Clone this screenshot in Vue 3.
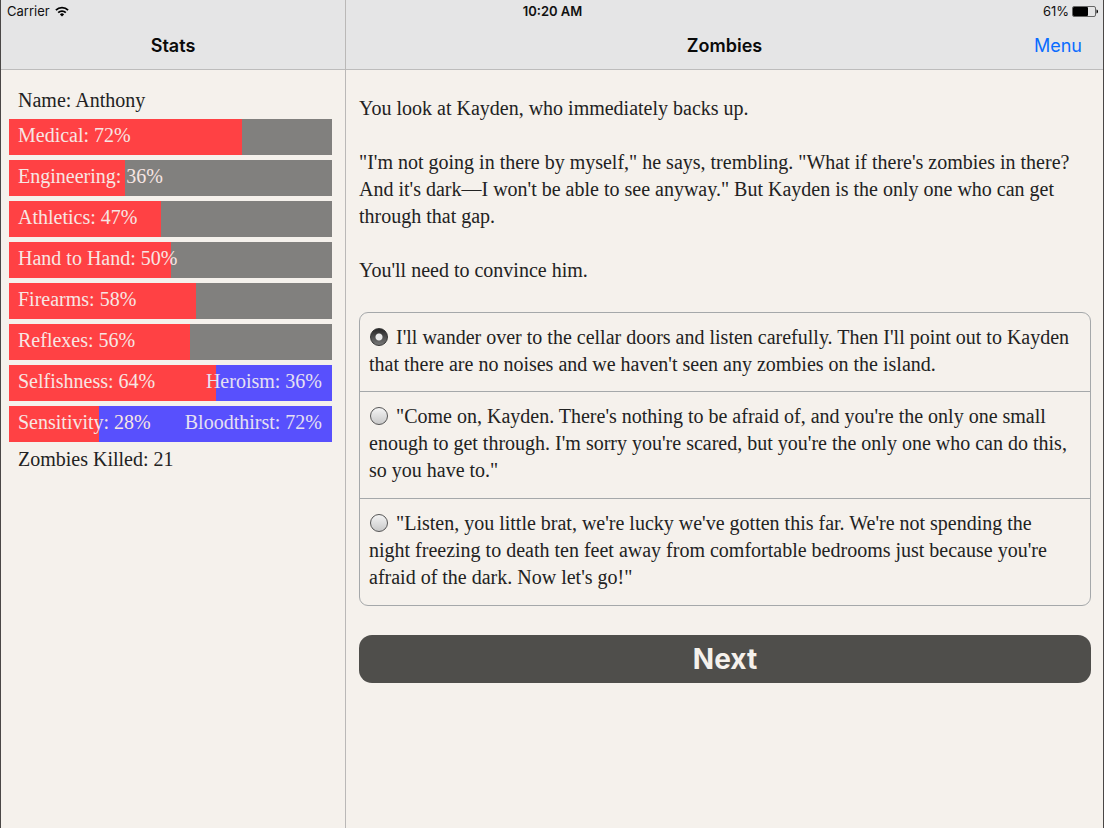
<script setup>
import { ref } from 'vue'

const stats = [
  { label: 'Medical', value: 72 },
  { label: 'Engineering', value: 36 },
  { label: 'Athletics', value: 47 },
  { label: 'Hand to Hand', value: 50 },
  { label: 'Firearms', value: 58 },
  { label: 'Reflexes', value: 56 },
  { label: 'Selfishness', value: 64, opposite: 'Heroism' },
  { label: 'Sensitivity', value: 28, opposite: 'Bloodthirst' },
]

const paragraphs = [
  'You look at Kayden, who immediately backs up.',
  '"I\'m not going in there by myself," he says, trembling. "What if there\'s zombies in there? And it\'s dark—I won\'t be able to see anyway." But Kayden is the only one who can get through that gap.',
  "You'll need to convince him.",
]

const choices = [
  "I'll wander over to the cellar doors and listen carefully. Then I'll point out to Kayden that there are no noises and we haven't seen any zombies on the island.",
  '"Come on, Kayden. There\'s nothing to be afraid of, and you\'re the only one small enough to get through. I\'m sorry you\'re scared, but you\'re the only one who can do this, so you have to."',
  '"Listen, you little brat, we\'re lucky we\'ve gotten this far. We\'re not spending the night freezing to death ten feet away from comfortable bedrooms just because you\'re afraid of the dark. Now let\'s go!"',
]

const selected = ref(0)
</script>

<template>
  <div class="screen">
    <div class="panes">
      <aside class="pane side">
        <header class="bar"><h1>Stats</h1></header>
        <div class="stats">
          <p class="line">Name: Anthony</p>
          <div v-for="s in stats" :key="s.label" class="meter" :class="{ opposed: s.opposite }">
            <div class="fill" :style="{ width: s.value + '%' }"></div>
            <span>{{ s.label }}: {{ s.value }}%</span>
            <span v-if="s.opposite">{{ s.opposite }}: {{ 100 - s.value }}%</span>
          </div>
          <p class="line">Zombies Killed: 21</p>
        </div>
      </aside>

      <main class="pane story">
        <header class="bar">
          <span></span>
          <h1>Zombies</h1>
          <a href="#menu" class="menu">Menu</a>
        </header>
        <form class="content" @submit.prevent>
          <p v-for="p in paragraphs" :key="p">{{ p }}</p>
          <div class="choices">
            <label v-for="(c, i) in choices" :key="i" class="choice">
              <input v-model="selected" type="radio" name="choice" :value="i" />{{ c }}
            </label>
          </div>
          <button type="submit" class="next">Next</button>
        </form>
      </main>
    </div>

    <!-- System status overlay, drawn across both navigation bars -->
    <div class="status">
      <span class="carrier">
        Carrier
        <svg width="14" height="11" viewBox="0 0 14 11" aria-hidden="true">
          <g fill="none" stroke="#000" stroke-width="1.8">
            <path d="M.9 4.2a8.7 8.7 0 0 1 12.2 0" />
            <path d="M3.2 6.7a5.4 5.4 0 0 1 7.6 0" />
          </g>
          <path d="M4.9 8.4a3 3 0 0 1 4.2 0L7 10.6z" />
        </svg>
      </span>
      <span class="clock">10:20 AM</span>
      <span class="power">
        61%
        <svg width="26" height="11" viewBox="0 0 26 11" aria-hidden="true">
          <rect x=".5" y=".5" width="23" height="10" rx="1.5" fill="none" stroke="#666" />
          <rect x="1" y="1" width="15" height="9" rx="1" />
          <path d="M24.500 3.500c2 .6 2 3.400 0 4z" />
        </svg>
      </span>
    </div>
  </div>
</template>

<style>
body {
  margin: 0;
  background: #f5f1ec;
}
</style>

<style scoped>
.screen {
  position: relative;
  box-sizing: border-box;
  min-height: 100vh;
  display: flex;
  flex-direction: column;
  border: solid #4a4746;
  border-width: 0 1px;
  background: #f5f1ec;
  color: #222;
  font-family: "Liberation Serif", serif;
  font-size: 20px;
  line-height: 27px;
}
.status {
  position: absolute;
  inset: 0 0 auto;
  display: grid;
  grid-template-columns: 1fr auto 1fr;
  align-items: center;
  padding: 0 5px 0 6px;
  color: #111;
  font: 13px/23px Inter, sans-serif;
}
.carrier,
.power {
  display: flex;
  align-items: center;
  gap: 5px;
}
.power {
  justify-content: flex-end;
  gap: 3px;
}
.clock {
  font-weight: 600;
}
.panes {
  flex: 1;
  display: grid;
  grid-template-columns: 345px 1fr;
}
.side {
  border-right: 1px solid #bab8b7;
}
.bar {
  display: grid;
  grid-template-columns: 1fr;
  align-items: center;
  padding: 32px 0 10px;
  border-bottom: 1px solid #bdbcbc;
  background: #e5e5e6;
  font-family: Inter, sans-serif;
  font-size: 18px;
}
.story .bar {
  grid-template-columns: 1fr auto 1fr;
  padding-left: 21px;
  padding-right: 21px;
}
h1 {
  margin: 0;
  color: #0a0a0a;
  font-size: 18px;
  font-weight: 600;
  text-align: center;
}
.menu {
  justify-self: end;
  color: #0a6cff;
  text-decoration: none;
}
p {
  margin: 0;
}
.stats {
  padding: 17px 13px 0 8px;
}
.line {
  padding: 0 9px 5px;
}
.meter {
  position: relative;
  display: flex;
  justify-content: space-between;
  box-sizing: border-box;
  height: 36px;
  margin-bottom: 5px;
  padding: 3px 10px 3px 9px;
  background: #81807e;
  color: #f7e6e3;
}
.meter + .line {
  margin-top: -1px;
}
.opposed {
  background: #5850fd;
}
.opposed span:last-child {
  color: #e6e0f2;
}
.fill {
  position: absolute;
  inset: 0 auto 0 0;
  background: #ff4144;
}
.meter span {
  position: relative;
}
.content {
  padding: 25px 12px 0 13px;
}
.content p {
  margin-bottom: 27px;
}
.choices {
  margin-top: 28px;
  border: 1px solid #a5a8aa;
  border-radius: 9px;
}
.choice {
  display: block;
  padding: 11px 14px 14px 9px;
}
.choice:first-child {
  padding-bottom: 13px;
}
.choice + .choice {
  border-top: 1px solid #a5a8aa;
}
.choice input {
  appearance: none;
  box-sizing: border-box;
  width: 18px;
  height: 18px;
  margin: 0 8px 0 1px;
  border: 1px solid #555;
  border-radius: 50%;
  background: linear-gradient(#f4f4f4, #c9c9c9);
  vertical-align: -2px;
}
.choice input:checked {
  border-color: #333;
  background: radial-gradient(circle, #e8e8e8 0 3px, transparent 4px), linear-gradient(#262626, #777);
}
.next {
  display: block;
  width: 100%;
  margin-top: 29px;
  padding: 0;
  border: 0;
  border-radius: 13px;
  background: #4f4e4b;
  color: #f5f1ec;
  font: bold 28px/48px Inter, sans-serif;
}
</style>
